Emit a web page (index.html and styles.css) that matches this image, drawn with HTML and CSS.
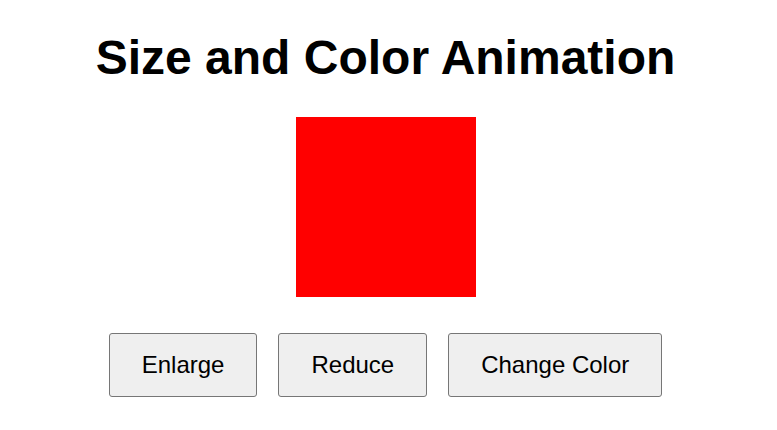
FILE: index.html
```html
<!DOCTYPE html>
<html>
<head>
<meta charset="utf-8">
<link rel="stylesheet" href="styles.css">
</head>
<body>
<main class="page">
  <h1 class="title">Size and Color Animation</h1>
  <div class="box"></div>
  <div class="controls">
    <button class="btn">Enlarge</button>
    <button class="btn">Reduce</button>
    <button class="btn">Change Color</button>
  </div>
</main>
</body>
</html>
```
FILE: styles.css
```css
html, body {
  margin: 0;
  padding: 0;
  background: #ffffff;
}
body {
  font-family: "Liberation Sans", Arial, sans-serif;
}
.page {
  display: flex;
  flex-direction: column;
  align-items: center;
  padding: 30px 6px 0 0;
}
.title {
  margin: 0;
  font-size: 48px;
  font-weight: bold;
  color: #000;
  line-height: 55px;
}
.box {
  width: 180px;
  height: 180px;
  background: #ff0000;
  margin-top: 32px;
}
.controls {
  display: flex;
  gap: 21px;
  margin-top: 36px;
}
.btn {
  font-family: "Liberation Sans", Arial, sans-serif;
  font-size: 24px;
  line-height: 28px;
  padding: 17px 32px;
  background: #efefef;
  border: 1px solid #767676;
  border-radius: 3px;
  color: #000;
}
```
